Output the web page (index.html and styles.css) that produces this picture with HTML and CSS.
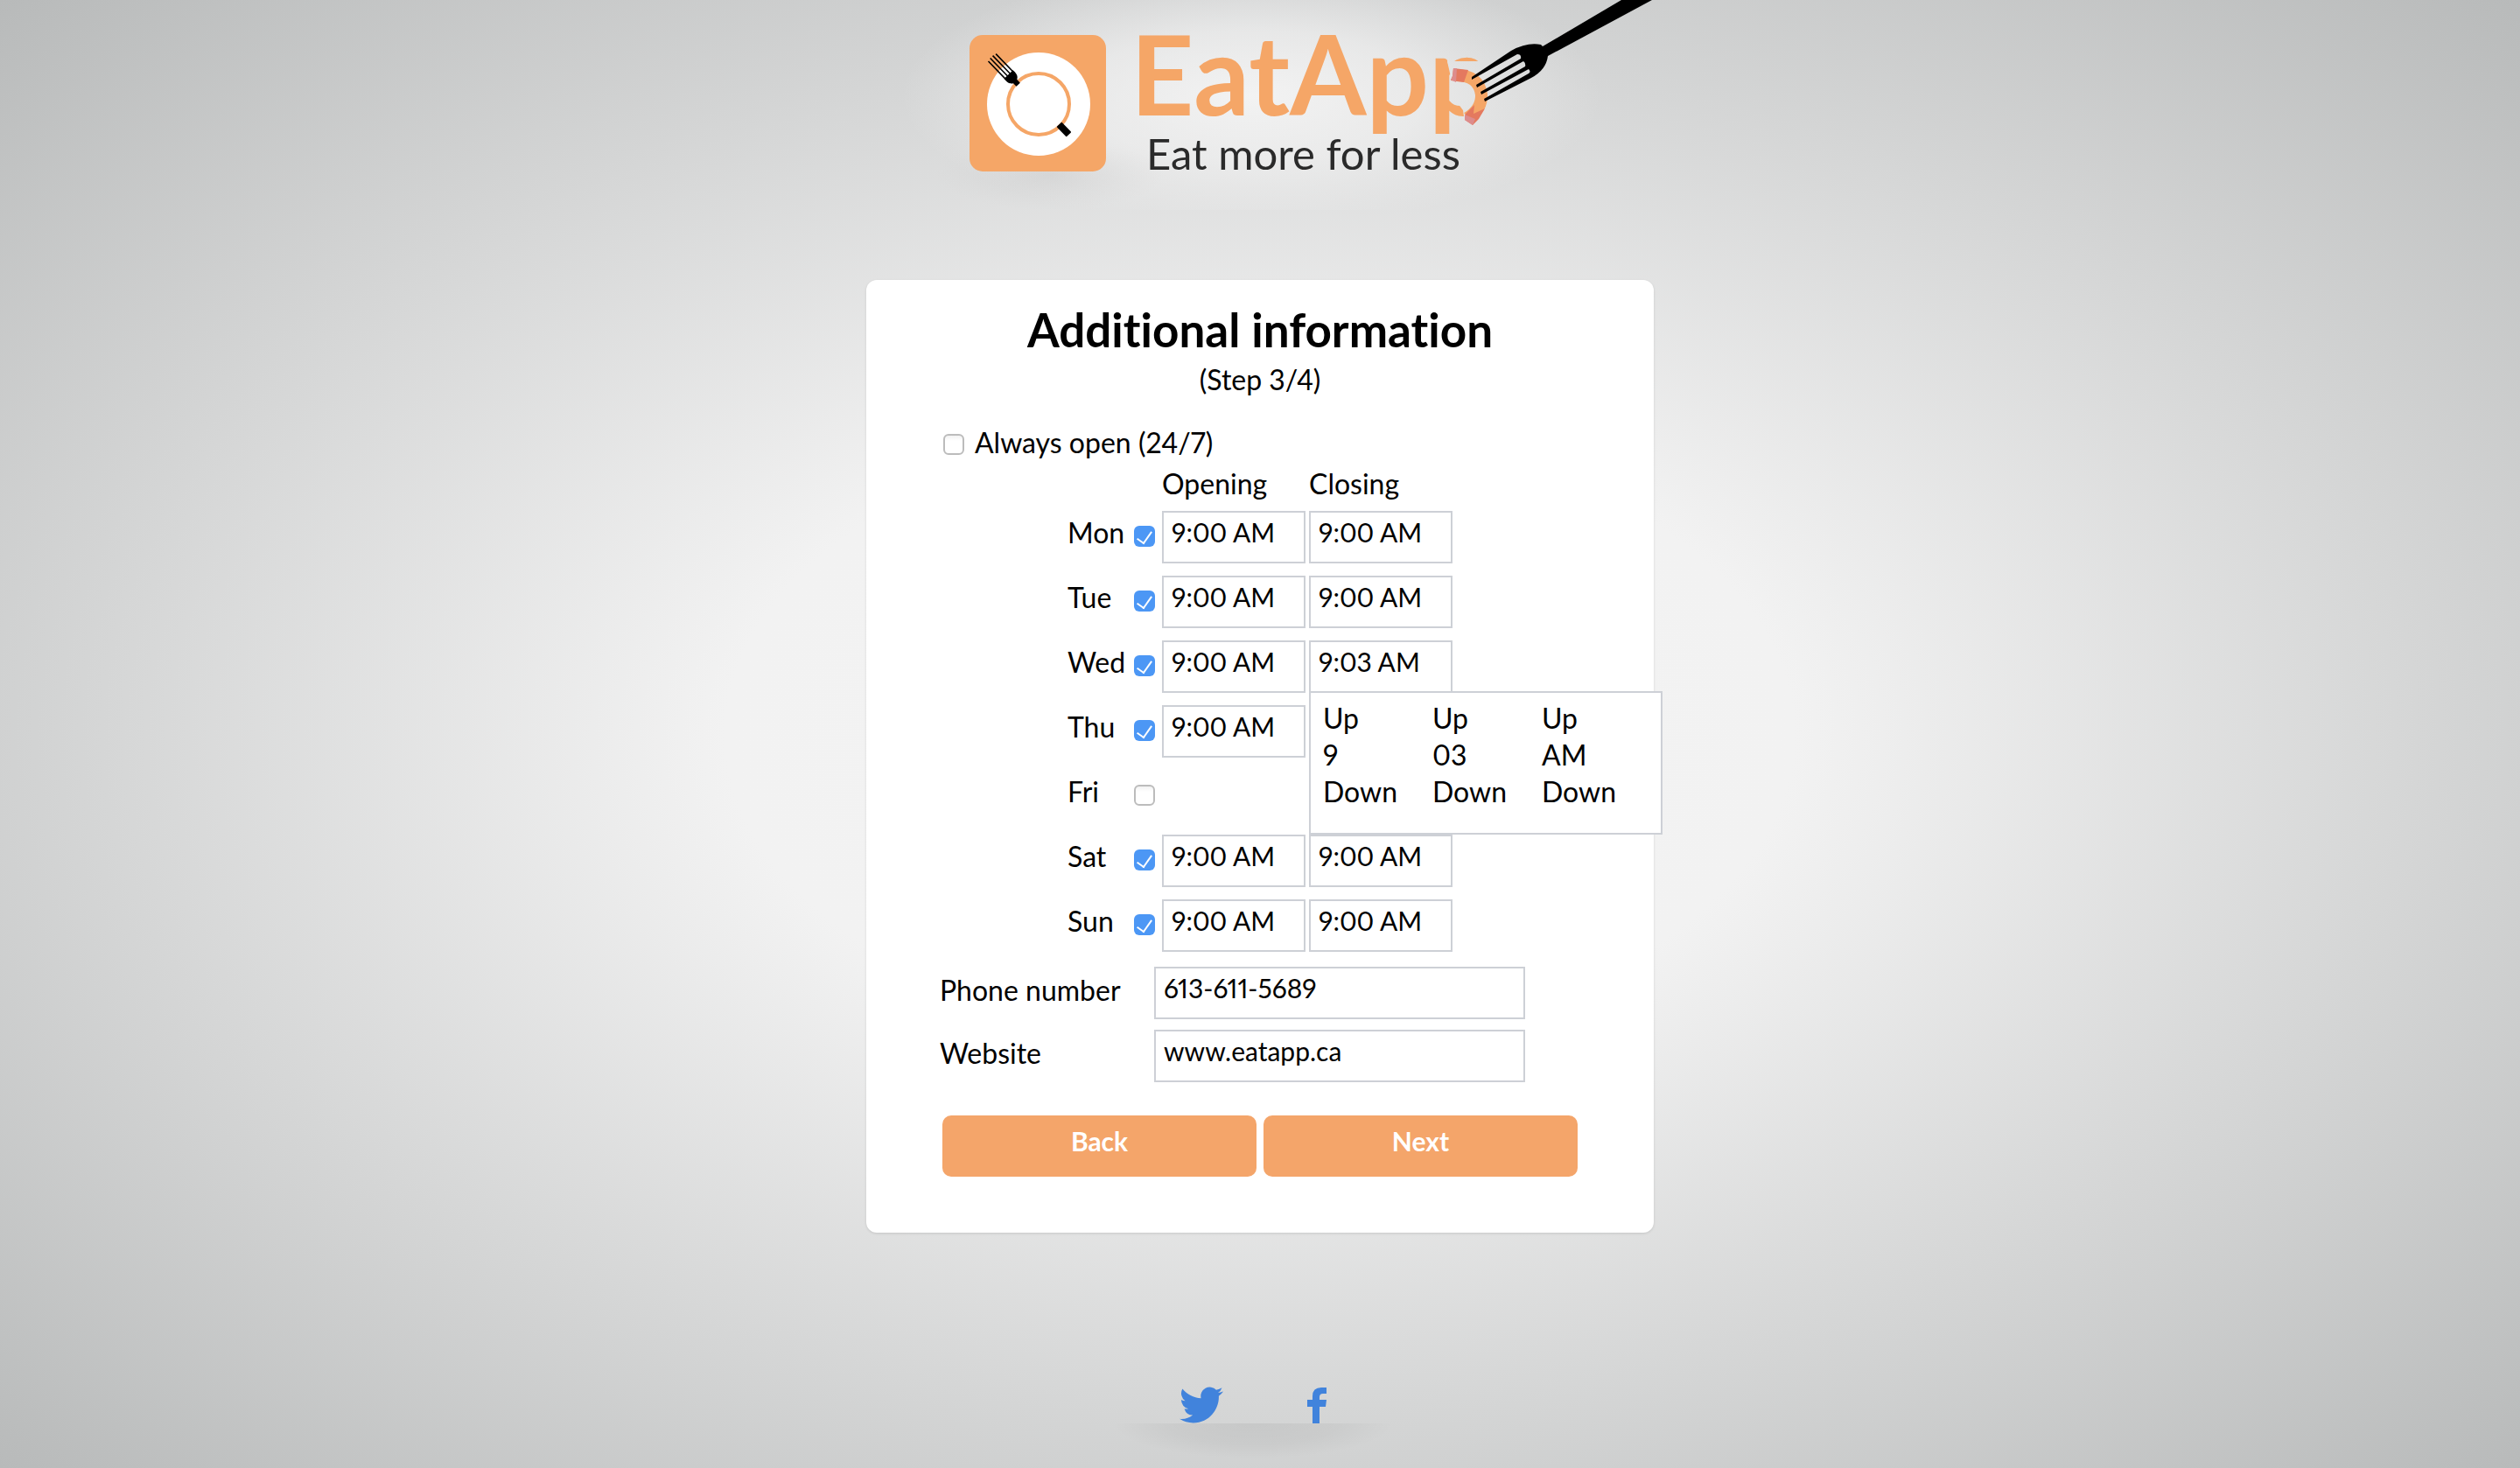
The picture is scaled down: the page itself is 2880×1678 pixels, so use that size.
FILE: index.html
```html
<!DOCTYPE html>
<html lang="en">
<head>
<meta charset="utf-8">
<title>EatApp - Additional information</title>
<link rel="stylesheet" href="styles.css">
</head>
<body>
<header class="brand">
  <svg class="logo" viewBox="0 0 900 240" role="img" aria-label="EatApp, eat more for less">
    <defs>
      <radialGradient id="glow">
        <stop offset="0" stop-color="#f4f4f4" stop-opacity=".95"/>
        <stop offset=".5" stop-color="#f2f2f2" stop-opacity=".65"/>
        <stop offset="1" stop-color="#eee" stop-opacity="0"/>
      </radialGradient>
      <radialGradient id="shade">
        <stop offset="0" stop-color="#bbb" stop-opacity=".3"/>
        <stop offset="1" stop-color="#ccc" stop-opacity="0"/>
      </radialGradient>
      <mask id="bite">
        <rect width="900" height="240" fill="#fff"/>
        <path d="M664 70L668 88L678 104L676 118L682 126L684 140H740V70Z" fill="#000"/>
      </mask>
    </defs>
    <ellipse cx="440" cy="110" rx="400" ry="150" fill="url(#glow)"/>
    <ellipse cx="210" cy="200" rx="130" ry="40" fill="url(#shade)"/>
    <rect x="118" y="40" width="156" height="156" rx="15" fill="#f5a667"/>
    <circle cx="197" cy="119" r="59" fill="#fff"/>
    <circle cx="197" cy="119" r="35" fill="none" stroke="#f5a667" stroke-width="4"/>
    <g transform="translate(173 96) rotate(-44)">
      <path d="M-7 -15C-8 -6 -4 -5 -3 -4V1H3V-4C4 -5 8 -6 7 -15Z"/>
      <path d="M-6 -14V-42M-2 -14V-43M2 -14V-43M6 -14V-42" fill="none" stroke="#000" stroke-width="1.6"/>
    </g>
    <rect x="-4" y="-8" width="8" height="16" rx="1" transform="translate(226 148) rotate(-44)"/>
    <text class="logo-name" x="302" y="132" mask="url(#bite)">EatApp</text>
    <text class="logo-tag" x="320" y="194">Eat more for less</text>
    <path d="M674 86Q700 86 703 108Q704 124 687 135" fill="none" stroke="#f5a667" stroke-width="14"/>
    <path d="M671 78L688 80L683 94L668 92L670 87Z" fill="#e4795f"/>
    <path d="M671 78L675 78L674 94L668 91L670 87Z" fill="#dd8c8c"/>
    <path d="M695 120L694 130L707 124L700 136L693 143L684 137L685 130Z" fill="#e4795f"/>
    <path d="M684 131L696 136L693 143L684 137Z" fill="#dd8c8c"/>
    <path d="M692 91L692 88L737 58Q755 48 771 51L773 53L863 0H898L779 64Q777 80 760 89L707 116L706 113L757 84Q760 82 757 79L703 108L702 105L753 76Q754 72 751 70L698 100L697 97L748 67Q749 62 744 62Z"/>
  </svg>
</header>

<main class="card">
  <h1>Additional information</h1>
  <p class="step">(Step 3/4)</p>
  <form>
    <div class="always">
      <input type="checkbox" id="always"><label for="always">Always open (24/7)</label>
    </div>
    <div class="hours">
      <div class="day head"><span class="open">Opening</span><span>Closing</span></div>
      <div class="day"><label for="mon">Mon</label><input type="checkbox" id="mon" checked><input type="text" aria-label="Monday opening" value="9:00 AM"><input type="text" aria-label="Monday closing" value="9:00 AM"></div>
      <div class="day"><label for="tue">Tue</label><input type="checkbox" id="tue" checked><input type="text" aria-label="Tuesday opening" value="9:00 AM"><input type="text" aria-label="Tuesday closing" value="9:00 AM"></div>
      <div class="day"><label for="wed">Wed</label><input type="checkbox" id="wed" checked><input type="text" aria-label="Wednesday opening" value="9:00 AM">
        <div class="field">
          <input type="text" aria-label="Wednesday closing" value="9:03 AM">
          <div class="picker">
            <div class="wheel"><button type="button">Up</button><span>9</span><button type="button">Down</button></div>
            <div class="wheel"><button type="button">Up</button><span>03</span><button type="button">Down</button></div>
            <div class="wheel"><button type="button">Up</button><span>AM</span><button type="button">Down</button></div>
          </div>
        </div>
      </div>
      <div class="day"><label for="thu">Thu</label><input type="checkbox" id="thu" checked><input type="text" aria-label="Thursday opening" value="9:00 AM"></div>
      <div class="day"><label for="fri">Fri</label><input type="checkbox" id="fri"></div>
      <div class="day"><label for="sat">Sat</label><input type="checkbox" id="sat" checked><input type="text" aria-label="Saturday opening" value="9:00 AM"><input type="text" aria-label="Saturday closing" value="9:00 AM"></div>
      <div class="day"><label for="sun">Sun</label><input type="checkbox" id="sun" checked><input type="text" aria-label="Sunday opening" value="9:00 AM"><input type="text" aria-label="Sunday closing" value="9:00 AM"></div>
    </div>
    <div class="contact">
      <label for="phone">Phone number</label><input type="text" id="phone" value="613-611-5689">
      <label for="site">Website</label><input type="text" id="site" value="www.eatapp.ca">
    </div>
    <div class="actions">
      <button type="button">Back</button>
      <button type="submit">Next</button>
    </div>
  </form>
</main>

<footer class="social">
  <a href="#twitter" aria-label="Twitter"><svg width="50" height="42" viewBox="0 2 24 20" preserveAspectRatio="none"><path d="M23.95 4.57a10 10 0 0 1-2.82.78 4.96 4.96 0 0 0 2.16-2.72c-.95.55-2 .96-3.12 1.18a4.92 4.92 0 0 0-8.38 4.48C7.69 8.1 4.07 6.13 1.64 3.16a4.92 4.92 0 0 0 1.52 6.57 4.9 4.9 0 0 1-2.23-.61v.06a4.92 4.92 0 0 0 3.95 4.83 5 5 0 0 1-2.21.08 4.94 4.94 0 0 0 4.6 3.42A9.87 9.87 0 0 1 0 19.54a13.99 13.99 0 0 0 7.56 2.21c9.05 0 14-7.5 14-13.98 0-.21 0-.42-.02-.63a9.94 9.94 0 0 0 2.46-2.55z"/></svg></a>
  <a href="#facebook" aria-label="Facebook"><svg width="24" height="42" viewBox="0 0 24 42"><path d="M7 42V23H1V15H7V11Q7 1 17 1H23V8H19Q15 8 15 12V15H23L22 23H15V42Z"/></svg></a>
</footer>
</body>
</html>
```
FILE: styles.css
```css
* { box-sizing: border-box; }

body {
  margin: 0;
  min-height: 100vh;
  display: flex;
  flex-direction: column;
  align-items: center;
  font: 32px/42px Lato, "Open Sans", sans-serif;
  font-variant-numeric: proportional-nums;
  font-variant-ligatures: none;
  color: #000;
  background: radial-gradient(ellipse farthest-corner at 50% 50%, #f3f3f3 0%, #f2f2f2 30%, #b8baba 100%);
}

.brand, .card { width: 900px; max-width: 100%; }
.logo { display: block; width: 100%; }
.logo-name { font: 700 126px Lato, sans-serif; fill: #f5a667; }
.logo-tag { font: 400 49px Lato, sans-serif; fill: #2a2a2a; }

.card {
  margin-top: 80px;
  padding: 27px 86px 64px;
  background: #fff;
  border-radius: 12px;
  box-shadow: 0 1px 3px rgba(0, 0, 0, .12);
}

h1 {
  margin: 0 0 6px;
  font-size: 53px;
  line-height: 60px;
  text-align: center;
}
.step { margin: 0 0 30px; text-align: center; }

input, button {
  font: inherit;
  font-variant-numeric: inherit;
  color: inherit;
}

input[type="text"] {
  width: 100%;
  height: 60px;
  padding: 0 9px 12px;
  border: 2px solid #cdd0d6;
  background: #fff;
  font-size: 30px;
}

input[type="checkbox"] {
  appearance: none;
  flex: none;
  width: 24px;
  height: 24px;
  margin: 11px 0 0;
  border: 2px solid #bcbcbc;
  border-radius: 6px;
  background: linear-gradient(#f2f2f2, #fff 30%);
}
input[type="checkbox"]:checked {
  display: grid;
  justify-items: center;
  border: 0;
  background: #4c97f5;
}
input[type="checkbox"]:checked::after {
  content: "";
  width: 8px;
  height: 15px;
  margin-top: 3px;
  border: solid #fff;
  border-width: 0 2px 2px 0;
  transform: rotate(35deg);
}

.always { display: flex; gap: 12px; padding-left: 2px; }

.hours {
  display: grid;
  gap: 14px;
  padding: 5px 0 0 144px;
}
.day {
  display: grid;
  grid-template-columns: 72px 28px 164px 164px;
  column-gap: 4px;
  align-items: start;
  height: 60px;
}
.day.head { height: 38px; }
.head .open { grid-column: 3; }
.day label { margin-top: 4px; }
.day input[type="checkbox"] { margin-top: 17px; }
.field { position: relative; }

.picker {
  position: absolute;
  z-index: 1;
  top: 58px;
  left: 0;
  display: grid;
  grid-template-columns: repeat(3, 125px);
  width: 404px;
  padding: 8px 0 26px 14px;
  border: 2px solid #cdd0d6;
  background: #fff;
}
.wheel { display: grid; justify-items: start; }
.wheel button { padding: 0; border: 0; background: none; }

.contact {
  display: grid;
  grid-template-columns: 245px 424px;
  row-gap: 12px;
  margin: 17px 0 0 -2px;
}
.contact label { margin-top: 6px; }

.actions {
  display: grid;
  grid-template-columns: 1fr 1fr;
  gap: 8px;
  padding: 38px 1px 0;
}
.actions button {
  height: 70px;
  padding: 0 0 12px;
  border: 0;
  border-radius: 10px;
  background: #f4a56a;
  color: #fff;
  font-size: 30px;
  font-weight: 700;
}

.social {
  display: grid;
  grid-template-columns: 50px 24px;
  column-gap: 95px;
  justify-content: center;
  width: 320px;
  margin: 176px 16px 0 0;
}
.social a { display: block; height: 42px; }
.social svg { display: block; fill: #4183dc; }
.social::after {
  content: "";
  grid-column: 1 / -1;
  justify-self: center;
  width: 320px;
  height: 40px;
  background: radial-gradient(160px 40px at 50% 0, rgba(0, 0, 0, .06), rgba(0, 0, 0, .04) 60%, transparent);
}
```
